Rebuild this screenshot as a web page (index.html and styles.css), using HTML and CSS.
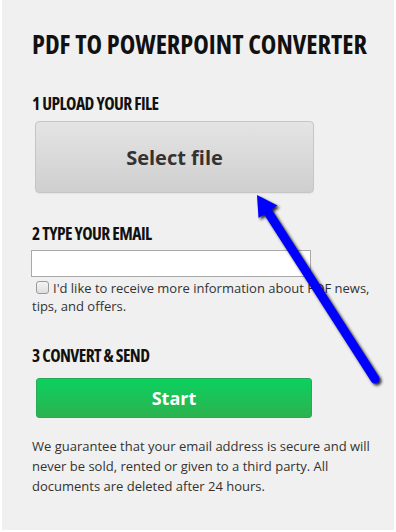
FILE: index.html
```html
<!DOCTYPE html>
<html>
<head>
<meta charset="utf-8">
<link rel="stylesheet" href="styles.css">
</head>
<body>
<div class="page">
  <h1 class="title">PDF TO POWERPOINT CONVERTER</h1>
  <h2 class="step step-1">1 UPLOAD YOUR FILE</h2>
  <button class="btn-select">Select file</button>
  <h2 class="step step-2">2 TYPE YOUR EMAIL</h2>
  <input class="email" type="text">
  <label class="optin"><span class="check"></span>I'd like to receive more information about PDF news, tips, and offers.</label>
  <h2 class="step step-3">3 CONVERT &amp; SEND</h2>
  <button class="btn-start">Start</button>
  <p class="note">We guarantee that your email address is secure and will never be sold, rented or given to a third party. All documents are deleted after 24 hours.</p>
  <svg class="arrow" width="396" height="532" viewBox="0 0 396 532">
    <g class="arrow-g">
      <line x1="375" y1="379" x2="266" y2="209" stroke="#0000ff" stroke-width="9" stroke-linecap="round"/>
      <polygon points="257,195 277.5,205.5 258.5,218" fill="#0000ff"/>
    </g>
  </svg>
</div>
</body>
</html>
```
FILE: styles.css
```css
html, body {
  margin: 0;
  padding: 0;
  background: #ffffff;
}
.page {
  position: relative;
  width: 392px;
  height: 530px;
  margin: 0 2px;
  background: #f0f0f0;
  padding: 28px 22px 0 30px;
  box-sizing: border-box;
  font-family: "Open Sans", "Liberation Sans", sans-serif;
  color: #333;
  overflow: hidden;
}
.title {
  margin: 0;
  font-family: "Open Sans", sans-serif;
  font-stretch: 75%;
  font-weight: 700;
  font-size: 26.3px;
  line-height: 32px;
  color: #111;
  white-space: nowrap;
}
.step {
  margin: 0;
  font-family: "Open Sans", sans-serif;
  font-stretch: 75%;
  font-weight: 700;
  font-size: 17.5px;
  letter-spacing: -0.55px;
  line-height: 22px;
  color: #111;
}
.step-1 { margin-top: 32px; }
.step-2 { margin-top: 29px; }
.step-3 { margin-top: 29px; }
.btn-select {
  display: block;
  margin: 7px 0 0 3px;
  width: 279px;
  height: 72px;
  border: 1px solid #c6c6c6;
  border-radius: 4px;
  background: linear-gradient(#e4e4e4, #cfcfcf);
  font-family: "Open Sans", sans-serif;
  font-weight: 700;
  font-size: 20px;
  color: #333;
  padding: 0;
  box-shadow: 0 1px 1px rgba(0,0,0,0.05);
}
.email {
  display: block;
  margin: 6px 0 0 -1px;
  width: 280px;
  height: 27px;
  box-sizing: border-box;
  border: 1px solid #a9a9a9;
  background: #fff;
  padding: 0;
}
.optin {
  display: block;
  margin-top: 2px;
  font-size: 13px;
  line-height: 18px;
  color: #333;
}
.check {
  display: inline-block;
  width: 11px;
  height: 11px;
  border: 1px solid #9a9a9a;
  border-radius: 3px;
  background: linear-gradient(#f4f4f4, #dedede);
  margin: 0 4px 0 4px;
  vertical-align: -1px;
}
.btn-start {
  display: block;
  margin: 12px 0 0 4px;
  width: 276px;
  height: 40px;
  border: 1px solid #2aa857;
  border-radius: 3px;
  background: linear-gradient(#0bd160, #2db24f);
  font-family: "Open Sans", sans-serif;
  font-weight: 700;
  font-size: 18px;
  color: #fff;
  padding: 0;
}
.note {
  margin: 18px 0 0 0;
  font-size: 13px;
  line-height: 20px;
  color: #333;
}
.arrow {
  position: absolute;
  left: -2px;
  top: 0;
  pointer-events: none;
}
.arrow-g {
  filter: drop-shadow(2px 2px 1.5px rgba(0,0,0,0.85));
}
```
